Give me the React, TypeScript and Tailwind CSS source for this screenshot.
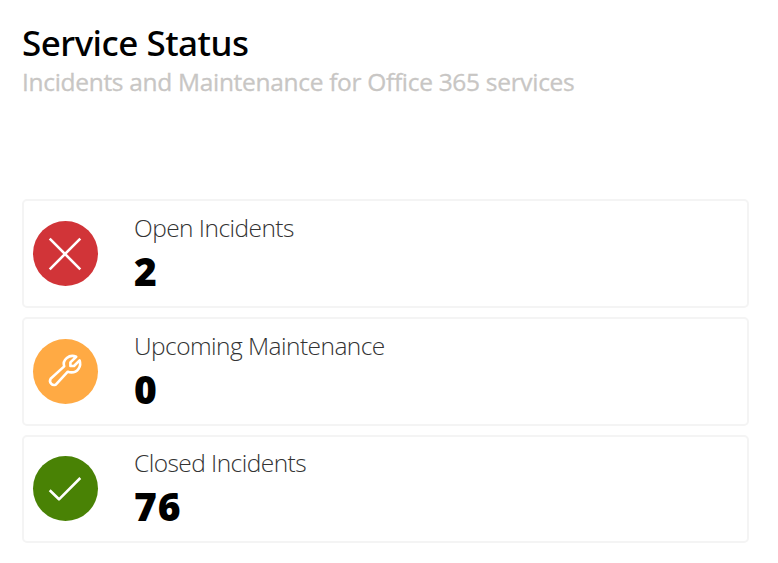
import React from "react";

type StatusItem = {
  label: string;
  count: number;
  color: string;
  icon: React.ReactNode;
};

const items: StatusItem[] = [
  {
    label: "Open Incidents",
    count: 2,
    color: "bg-[#d13438]",
    icon: <path d="M16.7 17.7 47.3 48.3M47.3 17.7 16.7 48.3" />,
  },
  {
    label: "Upcoming Maintenance",
    count: 0,
    color: "bg-[#ffaa44]",
    icon: (
      <path d="M43.2 17.8 37.4 23.4V27H41L46.6 21.4C48.8 27.4 44.4 33.4 38.4 33.4Q36.4 33.4 34.8 32.7L22.8 45.6A4.1 4.1 0 0 1 17.6 39.8L31.2 27.4C29 20.8 36.4 14.6 43.2 17.8Z" />
    ),
  },
  {
    label: "Closed Incidents",
    count: 76,
    color: "bg-[#498205]",
    icon: <path d="M16.7 34.2 26 43.3 47.3 22" />,
  },
];

function StatusCard({ item }: { item: StatusItem }) {
  return (
    <div className="flex h-[108.7px] items-center rounded-[5px] border-2 border-[#f4f4f4] pl-[9px]">
      <div className={`h-[65px] w-[65px] shrink-0 rounded-full ${item.color}`}>
        <svg
          viewBox="0 0 65 65"
          className="h-full w-full"
          fill="none"
          stroke="white"
          strokeWidth="2.6"
          strokeLinejoin="round"
        >
          {item.icon}
        </svg>
      </div>
      <div className="ml-9 flex flex-col pb-px">
        <span className="text-[24.5px] leading-8 font-light tracking-[-0.55px] whitespace-nowrap text-[#333333]">
          {item.label}
        </span>
        <span className="mt-1 font-['Noto_Sans',sans-serif] text-[39px] leading-[46px] font-black tracking-[0.8px]">
          {item.count}
        </span>
      </div>
    </div>
  );
}

export default function App() {
  return (
    <div className="h-[563px] w-[778px] bg-white pt-5 pr-[29px] pl-[22px] font-['Open_Sans','Noto_Sans',sans-serif] text-black">
      <h1 className="font-['Noto_Sans',sans-serif] text-[35px] leading-[45px] font-medium tracking-[-0.5px] whitespace-nowrap">
        Service Status
      </h1>
      <p className="text-[24.5px] leading-[33px] tracking-[-0.31px] whitespace-nowrap text-[#c8c6c4] [-webkit-text-stroke:0.3px_#c8c6c4]">
        Incidents and Maintenance for Office 365 services
      </p>
      <div className="mt-[101.2px] flex flex-col gap-[9px]">
        {items.map((item) => (
          <StatusCard key={item.label} item={item} />
        ))}
      </div>
    </div>
  );
}
